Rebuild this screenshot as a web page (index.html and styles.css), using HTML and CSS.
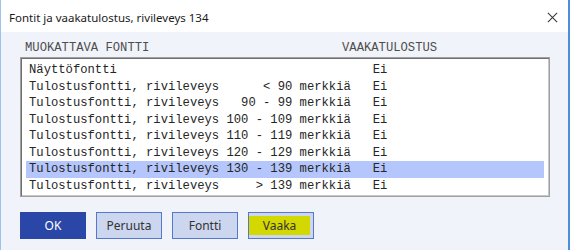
FILE: index.html
```
<!DOCTYPE html>
<html lang="fi">
<head>
  <meta charset="UTF-8" />
  <title>Fontit ja vaakatulostus</title>
  <link rel="stylesheet" href="styles.css">
</head>
<body>
  <div class="window">
    <div class="titlebar">
      <span class="title">Fontit ja vaakatulostus, rivileveys 134</span>
      <svg class="close-icon" viewBox="0 0 12 12" xmlns="http://www.w3.org/2000/svg">
        <path d="M1 1L11 11M11 1L1 11" stroke="#333" stroke-width="1.1" fill="none"/>
      </svg>
    </div>

    <div class="content">
      <!-- sarakeotsikot -->
      <div class="headers">
        <span class="col-font">MUOKATTAVA FONTTI</span>
        <span class="col-landscape">VAAKATULOSTUS</span>
      </div>

      <!-- fonttilista -->
      <div class="listbox">
        <div class="row">Näyttöfontti                                   Ei</div>
        <div class="row">Tulostusfontti, rivileveys      &lt; 90 merkkiä   Ei</div>
        <div class="row">Tulostusfontti, rivileveys   90 - 99 merkkiä   Ei</div>
        <div class="row">Tulostusfontti, rivileveys 100 - 109 merkkiä   Ei</div>
        <div class="row">Tulostusfontti, rivileveys 110 - 119 merkkiä   Ei</div>
        <div class="row">Tulostusfontti, rivileveys 120 - 129 merkkiä   Ei</div>
        <div class="row selected">Tulostusfontti, rivileveys 130 - 139 merkkiä   Ei</div>
        <div class="row">Tulostusfontti, rivileveys     &gt; 139 merkkiä   Ei</div>
      </div>

      <!-- painikkeet -->
      <div class="buttons">
        <button class="btn btn-ok">OK</button>
        <button class="btn">Peruuta</button>
        <button class="btn">Fontti</button>
        <button class="btn btn-focus"><span class="focus-fill">Vaaka</span></button>
      </div>
    </div>
  </div>
</body>
</html>
```

FILE: styles.css
```
body {
  margin: 0;
  background: #ffffff;
}

.window {
  width: 570px;
  height: 250px;
  box-sizing: border-box;
  padding-top: 3px;
  border-left: 1px solid #9ec2ec;
  border-right: 2px solid #4b8fda;
  background: #ffffff;
  display: flex;
  flex-direction: column;
}

/* otsikkopalkki */
.titlebar {
  height: 29px;
  flex: none;
  display: flex;
  align-items: center;
  justify-content: space-between;
  padding: 0 10px 0 8px;
  background: #ffffff;
}
.title {
  font-family: "Noto Sans", "Open Sans", sans-serif;
  font-size: 11.5px;
  color: #1a1a1a;
}
.close-icon {
  width: 11px;
  height: 11px;
}

/* sisältöalue */
.content {
  flex: 1;
  background: #f0f3fa;
  padding: 8px 0 0 19px;
}
.headers {
  display: flex;
  height: 16px;
  line-height: 16px;
  padding-left: 5px;
  font-family: "Liberation Mono", monospace;
  font-size: 12.2px;
  color: #4d4d4d;
  white-space: pre;
}
.col-font {
  width: 317px;
}

.listbox {
  margin-top: 1px;
  width: 530px;
  height: 140px;
  box-sizing: border-box;
  border: 1px solid #a0a0a0;
  box-shadow: inset 1px 1px 0 #707070, inset -1px -1px 0 #c8c8c8;
  background: #ffffff;
  padding: 4px 5px 0 5px;
  font-family: "Liberation Mono", monospace;
  font-size: 12.2px;
  color: #262626;
}
.row {
  height: 16.5px;
  line-height: 16.5px;
  padding-left: 3px;
  white-space: pre;
}
.row.selected {
  background: #b4c6fc;
}

/* painikkeet */
.buttons {
  display: flex;
  gap: 10px;
  margin-top: 15px;
}
.btn {
  width: 66px;
  height: 27px;
  padding: 0;
  border: 1px solid #5577cc;
  background: #ccd6ef;
  font-family: "Noto Sans", "Open Sans", sans-serif;
  font-size: 12px;
  color: #333333;
}
.btn-ok {
  background: #2a47a8;
  border-color: #2a47a8;
  color: #ffffff;
}
.btn-focus {
  padding: 3px 3px 3px 0;
}
.focus-fill {
  display: flex;
  align-items: center;
  justify-content: center;
  height: 100%;
  background: #d3d800;
}
```
